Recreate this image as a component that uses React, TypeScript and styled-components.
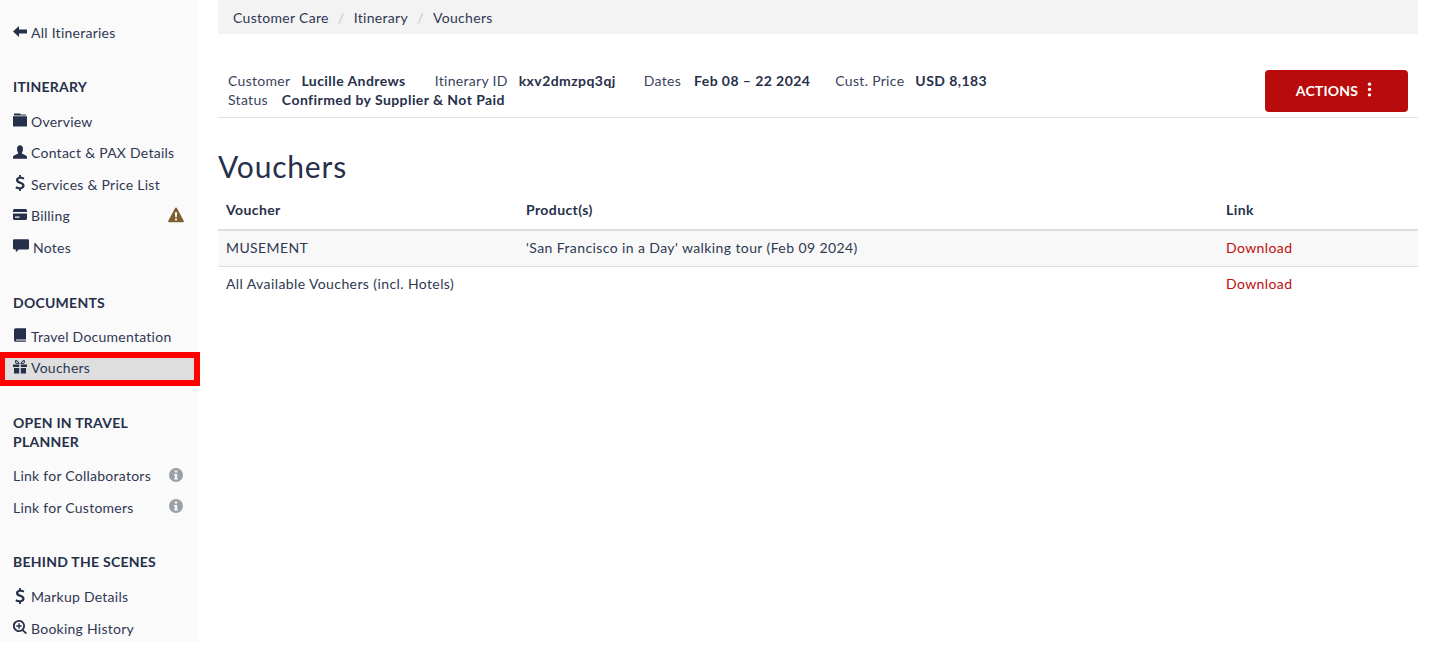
import React from "react";
import styled, { createGlobalStyle } from "styled-components";

const GlobalStyle = createGlobalStyle`
  html, body {
    margin: 0;
    padding: 0;
    background: #fff;
    color: #27304a;
    font-family: "Lato", "Noto Sans", sans-serif;
    font-size: 14px;
    overflow: hidden;
  }
`;

const Page = styled.div`
  display: flex;
  width: 1436px;
  height: 650px;
  overflow: hidden;
`;

const Sidebar = styled.aside`
  flex: none;
  width: 198px;
  height: 642px;
  padding: 17px 0 0 13px;
  box-sizing: border-box;
  background: #fafafa;
`;

const Section = styled.section<{ $after?: number }>`
  margin-bottom: ${(p) => p.$after ?? 30}px;
`;

const SectionTitle = styled.h4<{ $gap?: number }>`
  margin: 0 0 ${(p) => p.$gap ?? 9}px;
  padding-right: 40px;
  font-size: 14px;
  line-height: 19px;
  font-weight: 700;
  letter-spacing: 0.25px;
  color: #27304a;
`;

const NavItem = styled.div<{ $active?: boolean }>`
  position: relative;
  display: flex;
  align-items: center;
  gap: 4px;
  height: 31.5px;
  padding-right: 15px;
  letter-spacing: 0.25px;
  color: #2f3852;
  &::after {
    content: ${(p) => (p.$active ? '""' : "none")};
    position: absolute;
    left: -13px;
    top: 0;
    width: 200px;
    height: 34px;
    box-sizing: border-box;
    border: 6px solid #fe0000;
    border-left-width: 5px;
  }
  &::before {
    content: ${(p) => (p.$active ? '""' : "none")};
    position: absolute;
    left: -8px;
    top: 5px;
    width: 190px;
    height: 24px;
    background: #dedede;
    z-index: 0;
  }
  & > * {
    position: relative;
    z-index: 1;
  }
`;

const BackRow = styled(NavItem)`
  margin-bottom: 28px;
`;

const Trailing = styled.span<{ $nudge?: number }>`
  display: flex;
  margin-left: auto;
  margin-right: ${(p) => p.$nudge ?? 0}px;
`;

const Main = styled.main`
  flex: none;
  width: 1200px;
  margin-left: 20px;
`;

const Breadcrumb = styled.nav`
  display: flex;
  align-items: center;
  height: 34px;
  padding-left: 15px;
  background: #f3f3f3;
  letter-spacing: 0.3px;
`;

const Crumb = styled.span`
  color: #2f3852;
`;

const CrumbSep = styled.span`
  padding: 0 9.2px;
  color: #c4c4c4;
`;

const InfoBar = styled.div`
  display: flex;
  align-items: flex-start;
  justify-content: space-between;
  height: 84px;
  padding: 36px 10px 0;
  box-sizing: border-box;
  border-bottom: 1px solid #e2e2e2;
`;

const InfoText = styled.div`
  line-height: 19px;
  letter-spacing: 0.3px;
  padding-top: 1px;
`;

const Field = styled.span<{ $after?: number }>`
  margin-right: ${(p) => p.$after ?? 28}px;
`;

const Label = styled.span<{ $gap?: number }>`
  margin-right: ${(p) => p.$gap ?? 11}px;
  color: #3a435c;
`;

const Value = styled.b`
  font-weight: 700;
  letter-spacing: 0.43px;
  color: #27304a;
`;

const ActionButton = styled.button`
  display: flex;
  align-items: center;
  justify-content: center;
  gap: 4px;
  width: 143px;
  height: 42px;
  padding: 0 0 2px;
  border: 0;
  border-radius: 4px;
  background: #b90b0b;
  color: #fff;
  font-family: inherit;
  font-size: 14px;
  font-weight: 700;
  letter-spacing: 0.2px;
`;

const Heading = styled.h1`
  margin: 29px 0 6px;
  font-size: 30px;
  line-height: 38px;
  font-weight: 400;
  letter-spacing: 0.8px;
  color: #27304a;
`;

const Table = styled.table`
  width: 1200px;
  border-collapse: collapse;
  table-layout: fixed;
  letter-spacing: 0.4px;
`;

const Th = styled.th<{ $width: number }>`
  width: ${(p) => p.$width}px;
  height: 39px;
  padding: 0 8px 1px;
  box-sizing: border-box;
  text-align: left;
  font-weight: 700;
  border-bottom: 2px solid #dedede;
`;

const Tr = styled.tr<{ $striped?: boolean }>`
  background: ${(p) => (p.$striped ? "#f8f8f8" : "transparent")};
`;

const Td = styled.td<{ $last?: boolean }>`
  height: 36px;
  padding: 0 8px 2px;
  box-sizing: border-box;
  color: #2f3852;
  border-bottom: ${(p) => (p.$last ? "0" : "1px solid #dedede")};
`;

const DownloadLink = styled.a`
  color: #c00d0d;
  text-decoration: none;
`;

const Svg = styled.svg<{ $size?: number; $color?: string }>`
  flex: none;
  width: ${(p) => p.$size ?? 14}px;
  height: ${(p) => p.$size ?? 14}px;
  margin-bottom: 2px;
  fill: ${(p) => p.$color ?? "#27304a"};
`;

const DollarSvg = styled(Svg)`
  margin: 0 -1px 2px;
`;

type IconProps = { d: string; size?: number; color?: string };

function Icon({ d, size, color }: IconProps) {
  return (
    <Svg viewBox="0 0 14 14" $size={size} $color={color}>
      <path d={d} fillRule="evenodd" />
    </Svg>
  );
}

const icons = {
  back: "M0 6.5 6 1V4.5H14V8.5H6V12Z",
  folder: "M1 .5H7L8 1.5H13V2.5H1ZM0 3.2H14V13.5H0Z",
  user: "M4 3.8C4 1.6 5.2 .3 7 .3S10 1.6 10 3.8C10 5.8 9.3 7.2 8.8 8 8.8 9.4 14 9.8 14 12V13.7H0V12C0 9.8 5.2 9.4 5.2 8 4.7 7.2 4 5.8 4 3.8Z",
  dollar: "M6.2 0H7.8V1.6C9 1.7 10 2 10.8 2.4L10.2 4C9.3 3.6 8.3 3.3 7.3 3.3 6.2 3.3 5.6 3.7 5.6 4.4 5.6 5.1 6.3 5.4 7.6 5.9 9.6 6.6 11 7.4 11 9.3 11 11 9.8 12.1 7.8 12.4V14H6.2V12.4C5 12.3 3.9 12 3 11.5L3.6 9.8C4.6 10.3 5.8 10.7 6.9 10.7 8.1 10.7 8.9 10.2 8.9 9.4 8.9 8.6 8.1 8.2 6.8 7.7 4.8 7 3.5 6.2 3.5 4.5 3.5 3 4.6 1.9 6.2 1.6Z",
  card: "M0 2 1 1H13L14 2V4H0ZM0 5.5H14V11L13 12H1L0 11ZM2 8.5V9.8H6.5V8.5Z",
  comment: "M1 1H13A1 1 0 0 1 14 2V9A1 1 0 0 1 13 10H5L2.5 12.5V10H1A1 1 0 0 1 0 9V2A1 1 0 0 1 1 1Z",
  book: "M3 .2H13V11.5H3.5C2.7 11.5 2.7 12.6 3.5 12.6H13V13.8H3C1.8 13.8 1 13.2 1 12V2C1 .9 1.8 .2 3 .2Z",
  gift: "M0 4.5H6.2V7H0ZM7.8 4.5H14V7H7.8ZM1 8H6.2V13.5H1ZM7.8 8H13V13.5H7.8ZM6.7 4C5.5 1 4 0 3 0 1.5 0 1.5 3.5 4 4ZM5.2 3.2C4.6 2 4 1.2 3.3 1.2 2.8 1.2 2.8 3 4.2 3.2ZM7.3 4C8.5 1 10 0 11 0 12.5 0 12.5 3.5 10 4ZM8.8 3.2C9.4 2 10 1.2 10.7 1.2 11.2 1.2 11.2 3 9.8 3.2Z",
  search: "M6 0A6 6 0 0 1 10.6 9.8L14 13 12.8 14.2 9.3 10.9A6 6 0 1 1 6 0ZM6 1.8A4.2 4.2 0 1 0 6 10.2 4.2 4.2 0 0 0 6 1.8ZM5.3 3.3H6.7V5.3H8.7V6.7H6.7V8.7H5.3V6.7H3.3V5.3H5.3Z",
  warn: "M7 .5C7.4 .5 7.7 .7 7.9 1.1L13.8 12.2C14.1 12.8 13.8 13.4 13.1 13.4H.9C.2 13.4-.1 12.8.2 12.2L6.1 1.1C6.3 .7 6.6 .5 7 .5ZM6 4.5 6.3 9H7.7L8 4.5ZM6.2 10V11.8H7.8V10Z",
  info: "M7 0A7 7 0 1 1 7 14 7 7 0 0 1 7 0ZM5.8 2.4V4.6H8.2V2.4ZM5 6V7.2H5.8V10.4H5V11.6H9V10.4H8.2V6Z",
};

function DollarIcon() {
  return (
    <DollarSvg viewBox="0 0 14 14" $size={16}>
      <path d={icons.dollar} />
    </DollarSvg>
  );
}

function App() {
  return (
    <Page>
      <GlobalStyle />
      <Sidebar>
        <BackRow>
          <Icon d={icons.back} />
          <span>All Itineraries</span>
        </BackRow>

        <Section>
          <SectionTitle $gap={10}>ITINERARY</SectionTitle>
          <NavItem><Icon d={icons.folder} /><span>Overview</span></NavItem>
          <NavItem><Icon d={icons.user} /><span>Contact &amp; PAX Details</span></NavItem>
          <NavItem><DollarIcon /><span>Services &amp; Price List</span></NavItem>
          <NavItem>
            <Icon d={icons.card} />
            <span>Billing</span>
            <Trailing $nudge={-1}><Icon d={icons.warn} size={16} color="#7e5f2f" /></Trailing>
          </NavItem>
          <NavItem>
            <Icon d={icons.comment} size={16} />
            <span>Notes</span>
          </NavItem>
        </Section>

        <Section $after={29.5}>
          <SectionTitle $gap={8.5}>DOCUMENTS</SectionTitle>
          <NavItem><Icon d={icons.book} /><span>Travel Documentation</span></NavItem>
          <NavItem $active><Icon d={icons.gift} /><span>Vouchers</span></NavItem>
        </Section>

        <Section $after={29}>
          <SectionTitle>OPEN IN TRAVEL PLANNER</SectionTitle>
          <NavItem>
            <span>Link for Collaborators</span>
            <Trailing><Icon d={icons.info} color="#9ba0a8" /></Trailing>
          </NavItem>
          <NavItem>
            <span>Link for Customers</span>
            <Trailing><Icon d={icons.info} color="#9ba0a8" /></Trailing>
          </NavItem>
        </Section>

        <Section>
          <SectionTitle $gap={9.75}>BEHIND THE SCENES</SectionTitle>
          <NavItem><DollarIcon /><span>Markup Details</span></NavItem>
          <NavItem><Icon d={icons.search} /><span>Booking History</span></NavItem>
        </Section>
      </Sidebar>

      <Main>
        <Breadcrumb>
          <Crumb>Customer Care</Crumb>
          <CrumbSep>/</CrumbSep>
          <Crumb>Itinerary</Crumb>
          <CrumbSep>/</CrumbSep>
          <Crumb>Vouchers</Crumb>
        </Breadcrumb>

        <InfoBar>
          <InfoText>
            <div>
              <Field $after={29}><Label>Customer</Label><Value>Lucille Andrews</Value></Field>
              <Field><Label>Itinerary ID</Label><Value>kxv2dmzpq3qj</Value></Field>
              <Field $after={25}><Label $gap={13}>Dates</Label><Value>Feb 08 – 22 2024</Value></Field>
              <Field><Label>Cust. Price</Label><Value>USD 8,183</Value></Field>
            </div>
            <div>
              <Field><Label $gap={14}>Status</Label><Value>Confirmed by Supplier &amp; Not Paid</Value></Field>
            </div>
          </InfoText>
          <ActionButton>
            ACTIONS
            <Svg viewBox="0 0 14 14" $size={15} $color="#fff">
              <circle cx="7" cy="2" r="1.6" />
              <circle cx="7" cy="7" r="1.6" />
              <circle cx="7" cy="12" r="1.6" />
            </Svg>
          </ActionButton>
        </InfoBar>

        <Heading>Vouchers</Heading>

        <Table>
          <thead>
            <tr>
              <Th $width={300}>Voucher</Th>
              <Th $width={700}>Product(s)</Th>
              <Th $width={200}>Link</Th>
            </tr>
          </thead>
          <tbody>
            <Tr $striped>
              <Td>MUSEMENT</Td>
              <Td>'San Francisco in a Day' walking tour (Feb 09 2024)</Td>
              <Td><DownloadLink href="#">Download</DownloadLink></Td>
            </Tr>
            <Tr>
              <Td $last>All Available Vouchers (incl. Hotels)</Td>
              <Td $last />
              <Td $last><DownloadLink href="#">Download</DownloadLink></Td>
            </Tr>
          </tbody>
        </Table>
      </Main>
    </Page>
  );
}

export default App;
